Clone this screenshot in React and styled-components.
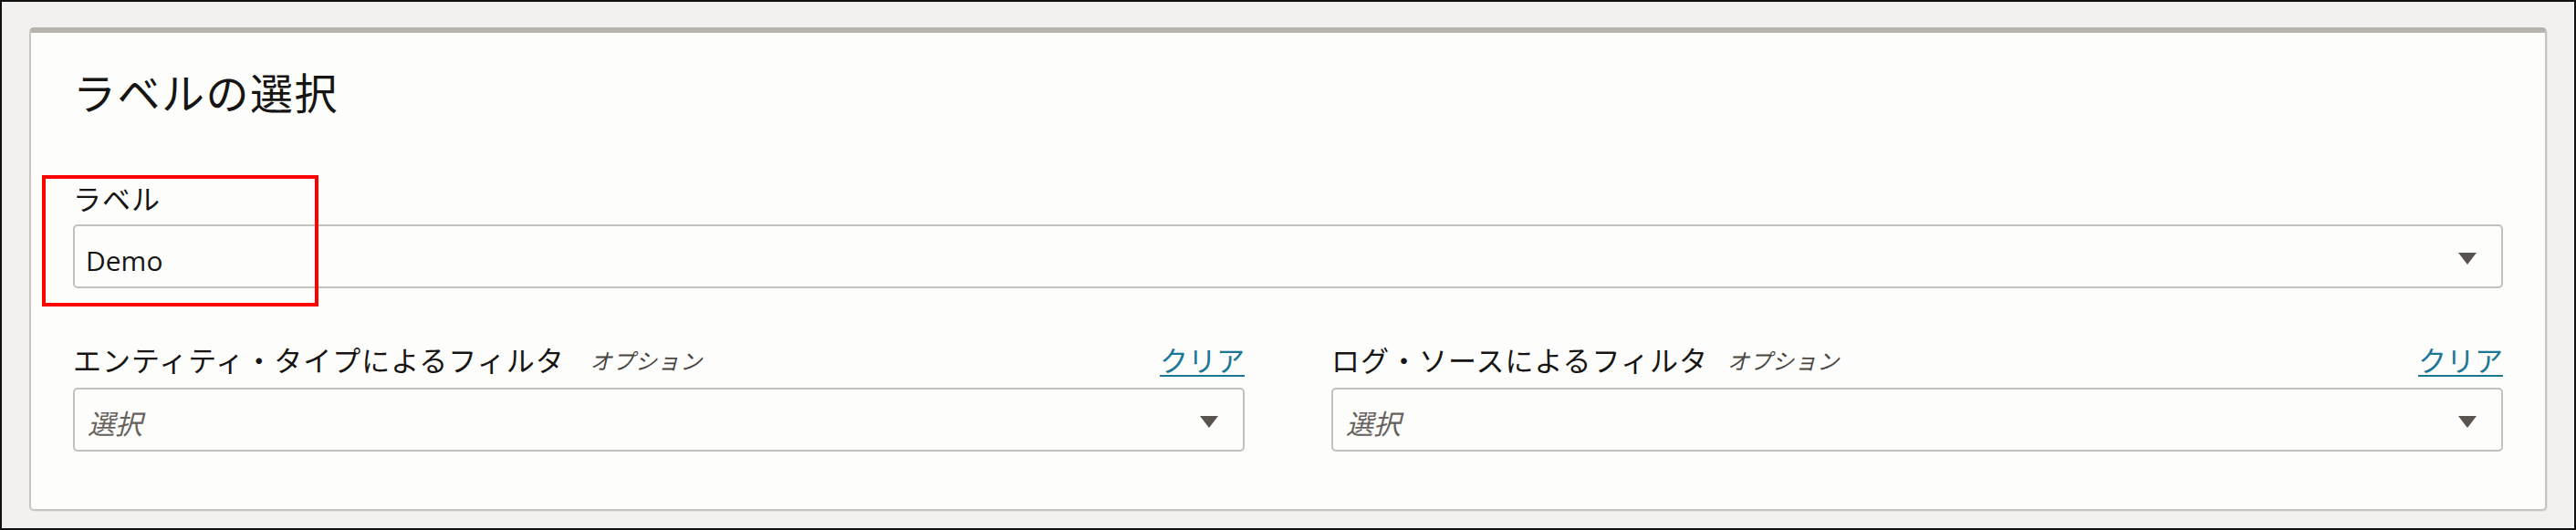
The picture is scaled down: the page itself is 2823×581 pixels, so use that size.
import React from 'react';
import styled, { createGlobalStyle } from 'styled-components';

const GlobalStyle = createGlobalStyle`
    body {
        margin: 0;
        background: #f2f1ef;
        font-family: "Open Sans", "Noto Sans CJK JP", sans-serif;
        color: #161513;
    }
`

const Frame = styled.div`
    position: relative;
    box-sizing: border-box;
    width: 2823px;
    height: 581px;
    border: 2px solid #111;
    background: #f2f1ef;
    padding: 28px 30px 19px 30px;
`

const Card = styled.div`
    box-sizing: border-box;
    height: 530px;
    background: #fdfdfc;
    border: 2px solid #c8c4bf;
    border-top: 6px solid #b8b3ac;
    border-radius: 5px;
    box-shadow: 1px 1px 1px rgba(0, 0, 0, 0.06);
    padding: 36px 46px 0 46px;
`

const Title = styled.h1`
    margin: 0 0 71px 0;
    height: 56px;
    line-height: 56px;
    font-size: 47px;
    font-weight: 400;
    letter-spacing: 1.5px;
    font-family: "Noto Sans CJK JP", sans-serif;
`

const Field = styled.div`
    display: flex;
    flex-direction: column;
`

const LabelRow = styled.div`
    display: flex;
    align-items: center;
    height: 36px;
    margin-bottom: ${p => p.gap || 12}px;
`

const Label = styled.span`
    font-family: "Noto Sans CJK JP", sans-serif;
    font-size: 31px;
    line-height: 36px;
    letter-spacing: 1px;
    white-space: nowrap;
`

const Optional = styled.span`
    font-family: "Noto Sans CJK JP", sans-serif;
    font-style: italic;
    font-size: 24px;
    letter-spacing: 0.6px;
    color: #4a4642;
    margin-left: ${p => p.offset || 28}px;
    white-space: nowrap;
`

const ClearLink = styled.a`
    margin-left: auto;
    font-family: "Noto Sans CJK JP", sans-serif;
    font-size: 31px;
    line-height: 36px;
    color: #1c7797;
    text-decoration: underline;
    text-underline-offset: 4px;
    text-decoration-thickness: 2px;
    cursor: pointer;
`

const SelectBox = styled.div`
    box-sizing: border-box;
    height: 70px;
    display: flex;
    align-items: center;
    background: #fdfdfc;
    border: 2px solid #c4c0bb;
    border-radius: 5px;
    padding: 0 27px 0 12px;
`

const Value = styled.span`
    flex: 1;
    font-size: 30px;
    padding-top: ${p => (p.placeholder ? 6 : 8)}px;
    font-style: ${p => (p.placeholder ? 'italic' : 'normal')};
    color: ${p => (p.placeholder ? '#67625d' : '#161513')};
    font-family: ${p => (p.placeholder ? '"Noto Sans CJK JP", sans-serif' : '"Open Sans", sans-serif')};
    padding-left: ${p => (p.placeholder ? 2 : 0)}px;
`

const Caret = styled.span`
    width: 0;
    height: 0;
    margin-top: 4px;
    border-left: 10px solid transparent;
    border-right: 10px solid transparent;
    border-top: 13px solid #58534e;
`

const Columns = styled.div`
    display: grid;
    grid-template-columns: 1fr 1fr;
    column-gap: 95px;
    margin-top: 60px;
`

const Highlight = styled.div`
    position: absolute;
    left: 44px;
    top: 190px;
    width: 303px;
    height: 144px;
    box-sizing: border-box;
    border: 4px solid #ff0000;
    pointer-events: none;
`

const Select = ({ value, placeholder }) => (
    <SelectBox>
        <Value placeholder={placeholder ? 1 : 0}>{value || placeholder}</Value>
        <Caret />
    </SelectBox>
);

const FilterField = ({ label, offset }) => (
    <Field>
        <LabelRow gap={13}>
            <Label>{label}</Label>
            <Optional offset={offset}>オプション</Optional>
            <ClearLink>クリア</ClearLink>
        </LabelRow>
        <Select placeholder="選択" />
    </Field>
);

const App = () => {
    return (
        <>
            <GlobalStyle />
            <Frame>
                <Card>
                    <Title>ラベルの選択</Title>
                    <Field>
                        <LabelRow gap={11}>
                            <Label>ラベル</Label>
                        </LabelRow>
                        <Select value="Demo" />
                    </Field>
                    <Columns>
                        <FilterField label="エンティティ・タイプによるフィルタ" offset={28} />
                        <FilterField label="ログ・ソースによるフィルタ" offset={21} />
                    </Columns>
                </Card>
                <Highlight />
            </Frame>
        </>
    );
};

export default App;
